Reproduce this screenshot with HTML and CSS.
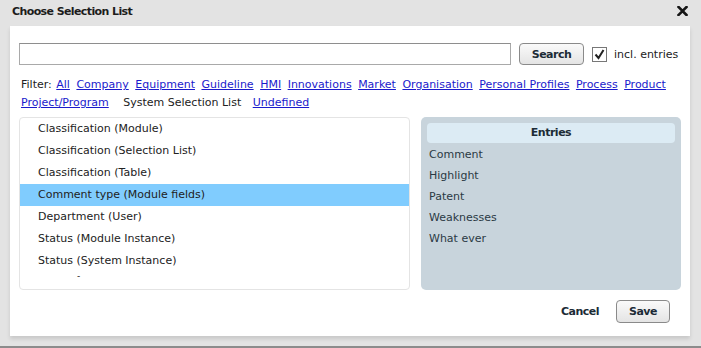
FILE: index.html
```html
<!DOCTYPE html>
<html lang="en">
<head>
    <meta charset="utf-8">
    <title>Choose Selection List</title>
    <link rel="stylesheet" href="styles.css">
</head>
<body>
    <div class="dialog">
        <div class="titlebar">
            <span class="title">Choose Selection List</span>
            <svg class="close" width="11" height="10" viewBox="0 0 11 10">
                <path d="M1.5 1 L9.5 9 M9.5 1 L1.5 9" stroke="#151515" stroke-width="2.6" stroke-linecap="square"/>
            </svg>
        </div>
        <div class="content">
            <div class="search-row">
                <input type="text" class="search-input">
                <button class="btn search-btn">Search</button>
                <label class="incl">
                    <span class="check">
                        <svg width="11" height="11" viewBox="0 0 11 11"><path d="M1.5 5.5 L4.5 9 L9.5 1" fill="none" stroke="#222" stroke-width="2"/></svg>
                    </span>
                    incl. entries
                </label>
            </div>

            <div class="filter">
                <span class="lbl">Filter:</span>
                <a href="#">All</a>
                <a href="#">Company</a>
                <a href="#">Equipment</a>
                <a href="#">Guideline</a>
                <a href="#">HMI</a>
                <a href="#">Innovations</a>
                <a href="#">Market</a>
                <a href="#">Organisation</a>
                <a href="#">Personal Profiles</a>
                <a href="#">Process</a>
                <a href="#">Product</a>
                <a href="#">Project/Program</a>
                <span class="current">System Selection List</span>
                <a href="#">Undefined</a>
            </div>

            <div class="panes">
                <ul class="lists">
                    <li>Classification (Module)</li>
                    <li>Classification (Selection List)</li>
                    <li>Classification (Table)</li>
                    <li class="selected">Comment type (Module fields)</li>
                    <li>Department (User)</li>
                    <li>Status (Module Instance)</li>
                    <li>Status (System Instance)</li>
                    <li class="cut">-</li>
                </ul>
                <div class="entries">
                    <div class="entries-head">Entries</div>
                    <ul>
                        <li>Comment</li>
                        <li>Highlight</li>
                        <li>Patent</li>
                        <li>Weaknesses</li>
                        <li>What ever</li>
                    </ul>
                </div>
            </div>

            <div class="actions">
                <a href="#" class="cancel">Cancel</a>
                <button class="btn save-btn">Save</button>
            </div>
        </div>
    </div>
</body>
</html>
```

FILE: styles.css
```css
body {
    margin: 0;
    padding: 0;
    font-family: "DejaVu Sans", Verdana, sans-serif;
    font-size: 11px;
    color: #222;
    background-color: #8c8c8c;
}

.dialog {
    width: 701px;
    height: 346px;
    background-color: #e3e3e3;
    overflow: hidden;
}

.titlebar {
    height: 26px;
    display: flex;
    align-items: center;
    justify-content: space-between;
    padding: 0 13px 0 12px;
    box-sizing: border-box;
}

.title {
    font-weight: bold;
    font-size: 11px;
    letter-spacing: -0.6px;
    color: #1c1c1c;
    margin-top: -4px;
}

.close {
    margin-top: -4px;
}

.content {
    margin: 0 11px 0 10px;
    height: 310px;
    background-color: #fff;
    box-shadow: 0 3px 4px rgba(0, 0, 0, 0.12);
    padding: 17px 9px 0 9px;
    box-sizing: border-box;
}

.search-row {
    display: flex;
    align-items: center;
    height: 22px;
}

.search-input {
    width: 492px;
    height: 22px;
    box-sizing: border-box;
    border: 1px solid #a9a9a9;
    border-top-color: #8e8e8e;
    margin: 0;
}

.btn {
    font-family: "DejaVu Sans", Verdana, sans-serif;
    font-weight: bold;
    font-size: 11px;
    letter-spacing: -0.5px;
    color: #1c2b36;
    background: linear-gradient(#fafafa, #e4e4e4);
    border: 1px solid #8a8a8a;
    border-radius: 4px;
    height: 22px;
    padding: 0;
    cursor: pointer;
}

.search-btn {
    width: 65px;
    margin-left: 8px;
}

.incl {
    display: flex;
    align-items: center;
    margin-left: 8px;
    color: #222;
}

.check {
    width: 13px;
    height: 13px;
    border: 1px solid #777;
    display: flex;
    align-items: center;
    justify-content: center;
    margin-right: 7px;
    background: #fff;
}

.filter {
    margin-top: 11px;
    padding-left: 2px;
    line-height: 18px;
    width: 665px;
}

.filter a {
    color: #1a1acc;
    text-decoration: underline;
    margin-right: 3px;
}

.filter .lbl {
    margin-right: 1px;
}

.filter .current {
    margin: 0 8px 0 8px;
}

.panes {
    display: flex;
    gap: 11px;
    margin-top: 5px;
}

.lists {
    list-style: none;
    margin: 0;
    padding: 0;
    width: 391px;
    height: 173px;
    box-sizing: border-box;
    border: 1px solid #e4e4e4;
    border-radius: 4px;
    overflow: hidden;
}

.lists li {
    height: 22px;
    line-height: 22px;
    padding-left: 18px;
}

.lists li.selected {
    background-color: #80ccfe;
}

.lists li.cut {
    height: 10px;
    line-height: 8px;
    padding-left: 57px;
    font-size: 9px;
}

.entries {
    width: 260px;
    height: 173px;
    background-color: #c8d4dc;
    border-radius: 5px;
    padding: 6px 6px 0 6px;
    box-sizing: border-box;
}

.entries-head {
    background-color: #dcebf4;
    border-radius: 4px;
    height: 20px;
    line-height: 20px;
    text-align: center;
    font-weight: bold;
    letter-spacing: -0.5px;
    color: #1c2b36;
}

.entries ul {
    list-style: none;
    margin: 0;
    padding: 1px 0 0 2px;
}

.entries li {
    height: 21px;
    line-height: 21px;
    color: #2b3a44;
}

.actions {
    display: flex;
    justify-content: flex-end;
    align-items: center;
    margin-top: 10px;
    padding-right: 11px;
}

.cancel {
    font-weight: bold;
    letter-spacing: -0.5px;
    color: #1c2b36;
    text-decoration: none;
    margin-right: 17px;
}

.save-btn {
    width: 54px;
    height: 23px;
}
```
